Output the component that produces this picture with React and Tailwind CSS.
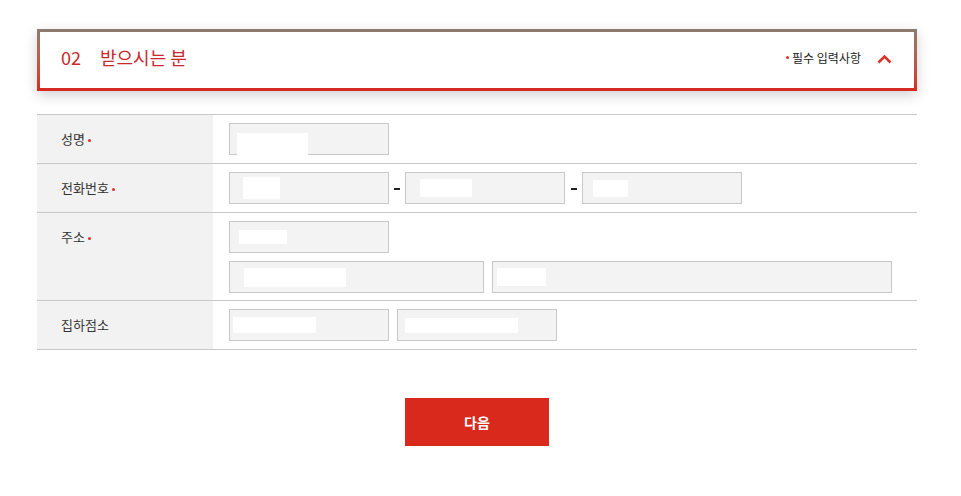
const font = { fontFamily: '"Noto Sans CJK KR", "Noto Sans", sans-serif' }

function Req() {
  return <span className="ml-[3px] mt-[3px] inline-block h-[3px] w-[3px] rounded-full bg-[#d8322a]" />
}

function Field({ className = 'w-[160px]', children }) {
  return (
    <div className={`flex h-[32px] items-center border border-[#c8c8c8] bg-[#f3f3f3] ${className}`}>
      {children}
    </div>
  )
}

function Row({ label, required, pb = 'pb-2', children }) {
  return (
    <div className="flex border-t border-[#c8c8c8]">
      <div className="flex w-[176px] shrink-0 items-start bg-[#f2f2f2] pl-6 pt-[15px] text-[13px] text-[#333]">
        <span className="flex items-center leading-[18px]">
          {label}
          {required && <Req />}
        </span>
      </div>
      <div className={`flex flex-1 flex-col gap-2 pt-2 pl-4 ${pb}`}>{children}</div>
    </div>
  )
}

function Dash({ w = 'w-[16px]' }) {
  return (
    <span className={`flex justify-center ${w}`}>
      <span className="mt-[1px] h-[2px] w-[6px] bg-[#222]" />
    </span>
  )
}

export default function App() {
  return (
    <div className="min-h-[496px] bg-white" style={font}>
      <div className="ml-[37px] w-[880px] pt-[29px]">
        <div className="bg-gradient-to-b from-[#8c7b70] to-[#d8261d] p-[3px] shadow-[0_4px_12px_rgba(0,0,0,0.18)]">
          <div className="flex h-[56px] items-center bg-white pb-[5px] pl-[21px] pr-[22px]">
            <span className="text-[18px] text-[#c9282d]">02</span>
            <span className="ml-[19px] text-[18px] text-[#c9282d]">받으시는 분</span>
            <span className="ml-auto flex items-center text-[12px] text-[#222]">
              <span className="mr-[3px] h-[3px] w-[3px] rounded-full bg-[#d8322a]" />
              필수 입력사항
            </span>
            <svg className="ml-[16px] mt-[3px]" width="15" height="10" viewBox="0 0 15 10" fill="none">
              <path d="M1.5 8.5l6-6 6 6" stroke="#d8322a" strokeWidth="2.6" />
            </svg>
          </div>
        </div>

        <div className="mt-[23px] border-b border-[#c8c8c8]">
          <Row label="성명" required>
            <Field>
              <span className="ml-[7px] mt-[12px] h-[25px] w-[71px] bg-white" />
            </Field>
          </Row>
          <Row label="전화번호" required>
            <div className="flex items-center">
              <Field>
                <span className="ml-[13px] h-[22px] w-[37px] bg-white" />
              </Field>
              <Dash />
              <Field>
                <span className="ml-[14px] h-[18px] w-[52px] bg-white" />
              </Field>
              <Dash w="w-[17px]" />
              <Field>
                <span className="ml-[10px] h-[17px] w-[35px] bg-white" />
              </Field>
            </div>
          </Row>
          <Row label="주소" required pb="pb-[7px]">
            <Field>
              <span className="ml-[9px] h-[14px] w-[48px] bg-white" />
            </Field>
            <div className="flex gap-2">
              <Field className="w-[255px]">
                <span className="ml-[14px] h-[19px] w-[102px] bg-white" />
              </Field>
              <Field className="w-[400px]">
                <span className="ml-[4px] h-[18px] w-[49px] bg-white" />
              </Field>
            </div>
          </Row>
          <Row label="집하점소">
            <div className="flex gap-2">
              <Field>
                <span className="ml-[3px] h-[16px] w-[83px] bg-white" />
              </Field>
              <Field>
                <span className="ml-[7px] h-[15px] w-[113px] bg-white" />
              </Field>
            </div>
          </Row>
        </div>

        <div className="mt-[48px] flex justify-center">
          <button className="h-[48px] w-[144px] bg-[#d9291c] text-[14px] font-bold text-white">다음</button>
        </div>
      </div>
    </div>
  )
}
